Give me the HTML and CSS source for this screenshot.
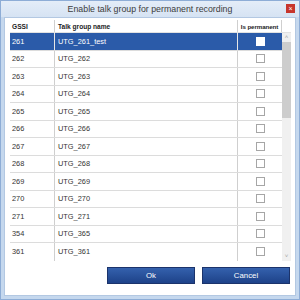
FILE: index.html
```html
<!DOCTYPE html>
<html lang="en">
<head>
	<meta charset="UTF-8">
	<title>Enable talk group for permanent recording</title>
	<link rel="stylesheet" href="styles.css">
</head>
<body>
	<div class="window">
		<div class="titlebar">
			<span class="title">Enable talk group for permanent recording</span>
			<span class="close">&#215;</span>
		</div>
		<div class="client">
			<div class="grid">
				<div class="table">
					<div class="row head">
						<div class="cell c1">GSSI</div>
						<div class="cell c2">Talk group name</div>
						<div class="cell c3">Is permanent</div>
						<div class="cell c4"></div>
					</div>
					<div class="body">
						<div class="rows">
							<div class="row on"><div class="cell c1">261</div><div class="cell c2">UTG_261_test</div><div class="cell c3"><span class="box"></span></div></div>
							<div class="row"><div class="cell c1">262</div><div class="cell c2">UTG_262</div><div class="cell c3"><span class="box"></span></div></div>
							<div class="row"><div class="cell c1">263</div><div class="cell c2">UTG_263</div><div class="cell c3"><span class="box"></span></div></div>
							<div class="row"><div class="cell c1">264</div><div class="cell c2">UTG_264</div><div class="cell c3"><span class="box"></span></div></div>
							<div class="row"><div class="cell c1">265</div><div class="cell c2">UTG_265</div><div class="cell c3"><span class="box"></span></div></div>
							<div class="row"><div class="cell c1">266</div><div class="cell c2">UTG_266</div><div class="cell c3"><span class="box"></span></div></div>
							<div class="row"><div class="cell c1">267</div><div class="cell c2">UTG_267</div><div class="cell c3"><span class="box"></span></div></div>
							<div class="row"><div class="cell c1">268</div><div class="cell c2">UTG_268</div><div class="cell c3"><span class="box"></span></div></div>
							<div class="row"><div class="cell c1">269</div><div class="cell c2">UTG_269</div><div class="cell c3"><span class="box"></span></div></div>
							<div class="row"><div class="cell c1">270</div><div class="cell c2">UTG_270</div><div class="cell c3"><span class="box"></span></div></div>
							<div class="row"><div class="cell c1">271</div><div class="cell c2">UTG_271</div><div class="cell c3"><span class="box"></span></div></div>
							<div class="row"><div class="cell c1">354</div><div class="cell c2">UTG_365</div><div class="cell c3"><span class="box"></span></div></div>
							<div class="row last"><div class="cell c1">361</div><div class="cell c2">UTG_361</div><div class="cell c3"><span class="box"></span></div></div>
						</div>
						<div class="scrollbar">
							<span class="arrow">&#708;</span>
							<div class="track"><div class="thumb"></div></div>
							<span class="arrow">&#709;</span>
						</div>
					</div>
				</div>
			</div>
			<div class="buttons">
				<button class="btn">Ok</button>
				<button class="btn">Cancel</button>
			</div>
		</div>
	</div>
</body>
</html>
```
FILE: styles.css
```css
html, body {
	margin: 0;
	padding: 0;
}
body {
	width: 300px;
	height: 300px;
	overflow: hidden;
	font-family: "Liberation Sans", Arial, sans-serif;
}

.window {
	width: 300px;
	height: 300px;
	box-sizing: border-box;
	background: #c5d8ee;
	border: 1px solid #8eadd6;
	display: flex;
	flex-direction: column;
}

.titlebar {
	height: 16px;
	display: flex;
	align-items: center;
	justify-content: center;
	position: relative;
	background: linear-gradient(#e4edf8, #d6e3f3);
}
.title { font-size: 8.8px; color: #3c3c3c; }
.close {
	position: absolute;
	right: 4px;
	top: 3px;
	width: 9px;
	height: 9px;
	background: #c7352c;
	color: #fff;
	font-size: 7px;
	line-height: 9px;
	text-align: center;
}

.client {
	flex: 1;
	margin: 0 3px 3px 3px;
	background: #fff;
	border: 1px solid #b3c8e2;
	display: flex;
	flex-direction: column;
	padding: 2px 4px 0 5px;
}

.table { width: 281px; }

.row {
	display: flex;
	height: 17.5px;
	border-bottom: 1px solid #dcdcdc;
	box-sizing: border-box;
	font-size: 7.4px;
	color: #333;
}
.row.last { border-bottom: none; }
.row.head { height: 13px; font-weight: bold; font-size: 6.6px; border-bottom: 1px solid #e2e2e2; color: #222; }

.cell {
	display: flex;
	align-items: center;
	box-sizing: border-box;
	border-right: 1px solid #cfcfcf;
}
.c1 { width: 45px; padding-left: 2px; }
.c2 { width: 183px; padding-left: 3px; }
.c3 { width: 44px; justify-content: center; border-right: none; }
.head .c3 { border-right: 1px solid #cfcfcf; white-space: nowrap; font-size: 6.2px; letter-spacing: -0.1px; }
.c4 { width: 9px; border-right: none; }

.row.on { background: #2b5ba9; color: #fff; }
.row.on .cell { border-right-color: #e6e6e6; }

.box {
	width: 7px;
	height: 7px;
	border: 1px solid #a6a6a6;
	background: #fff;
}
.row.on .box { border-color: #fff; }

.body { display: flex; }
.rows { width: 272px; }

.scrollbar {
	width: 9px;
	background: #f0f0f0;
	display: flex;
	flex-direction: column;
	align-items: center;
}
.arrow { font-size: 6px; color: #a0a0a0; height: 9px; line-height: 9px; }
.track { flex: 1; width: 9px; }
.thumb { height: 76px; background: #cdcdcd; }

.buttons {
	display: flex;
	justify-content: flex-end;
	gap: 7px;
	margin-top: 6px;
	padding-right: 1px;
}
.btn {
	width: 88px;
	height: 17px;
	border: 1px solid #1b336b;
	background: linear-gradient(#3461ad, #1e4289);
	color: #fff;
	font-family: "Liberation Sans", Arial, sans-serif;
	font-size: 7.8px;
	padding: 0;
}
```
